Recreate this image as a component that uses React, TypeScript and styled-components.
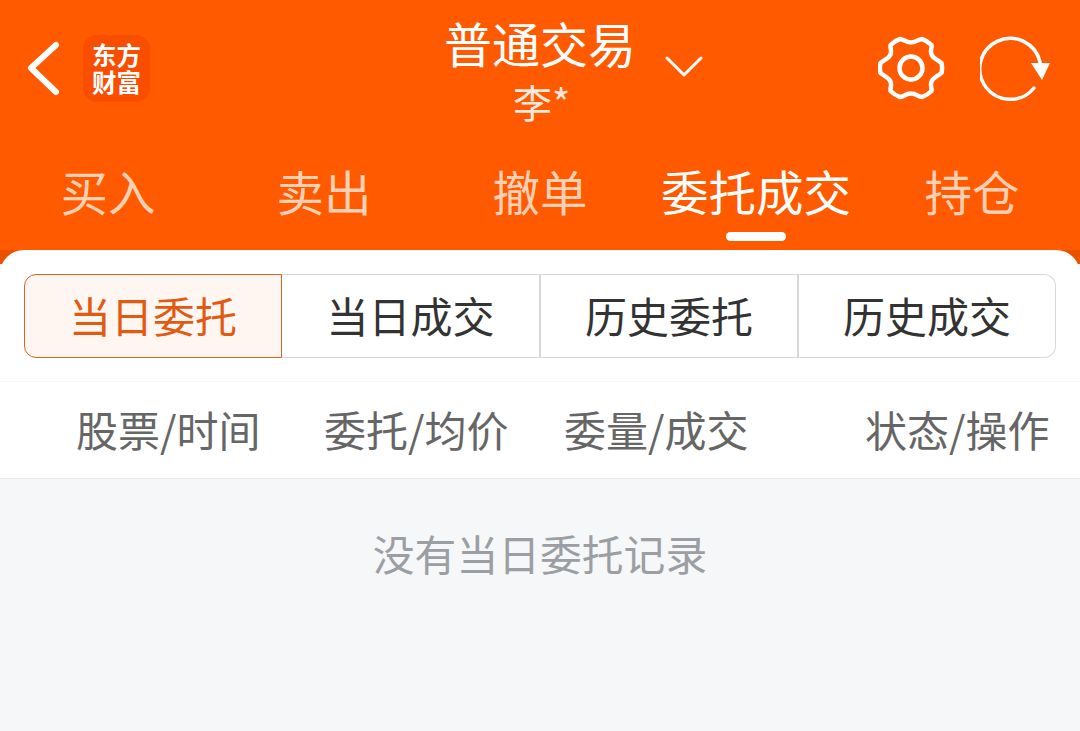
import React from 'react';
import styled, { createGlobalStyle } from 'styled-components';

const GlobalStyle = createGlobalStyle`
  html, body {
    margin: 0;
    padding: 0;
    background: #f6f7f9;
  }
  * {
    box-sizing: border-box;
  }
`;

const Page = styled.div`
  width: 1080px;
  height: 731px;
  overflow: hidden;
  display: flex;
  flex-direction: column;
  background: #f6f7f9;
  font-family: "Noto Sans CJK SC", "Noto Sans", sans-serif;
`;

const Header = styled.header`
  height: 264px;
  flex-shrink: 0;
  background: linear-gradient(#ff5a00 0, #ff5a00 250px, #e85200 250px);
  display: flex;
  flex-direction: column;
`;

const TopBar = styled.div`
  height: 140px;
  display: grid;
  grid-template-columns: 58px 67px 296px 188px 244px 66px 36px 72px 28px;
  padding-left: 25px;
`;

const BackCell = styled.div`
  padding-top: 40px;
`;

const Logo = styled.div`
  width: 67px;
  height: 67px;
  margin-top: 35px;
  border-radius: 14px;
  background: #f94d00;
  color: #fff;
  font-size: 24.5px;
  font-weight: 700;
  line-height: 27px;
  text-align: center;
  padding-top: 6px;
`;

const TitleBlock = styled.div`
  grid-column: 4;
  color: #fff;
  text-align: center;
  position: relative;
`;

const Title = styled.div`
  font-size: 48px;
  line-height: 56px;
  margin: 14px 0 0 -2px;
  text-align: left;
  white-space: nowrap;
`;

const Account = styled.div`
  font-size: 39px;
  line-height: 46px;
  margin-top: 8px;
  padding-left: 3px;
  color: #ffe9dc;
`;

const Caret = styled.svg`
  position: absolute;
  left: 219px;
  top: 55px;
`;

const IconCell = styled.div<{ $col: number }>`
  grid-column: ${(p) => p.$col};
  padding-top: 35px;
`;

const TabBar = styled.nav`
  height: 110px;
  display: grid;
  grid-template-columns: repeat(5, 216px);
`;

const Tab = styled.div<{ $active?: boolean }>`
  position: relative;
  text-align: center;
  font-size: 47.5px;
  line-height: 56px;
  padding-top: 23px;
  white-space: nowrap;
  color: ${(p) => (p.$active ? '#fff' : '#ffd0b3')};
`;

const TabMark = styled.span`
  position: absolute;
  left: 78px;
  top: 92px;
  width: 60px;
  height: 9px;
  border-radius: 5px;
  background: #fff;
`;

const Panel = styled.main`
  margin-top: -14px;
  border-radius: 24px 24px 0 0;
  background: #fff;
  flex-shrink: 0;
`;

const Segments = styled.div`
  display: grid;
  grid-template-columns: 258px 259px 258px 257px;
  height: 132px;
  padding: 24px 24px 0;
  border-bottom: 1px solid #f5f5f5;
`;

const Segment = styled.div<{ $active?: boolean; $first?: boolean; $last?: boolean }>`
  height: 84px;
  display: flex;
  align-items: center;
  justify-content: center;
  font-size: 42px;
  padding-bottom: 3px;
  white-space: nowrap;
  color: ${(p) => (p.$active ? '#e25a12' : '#333')};
  background: ${(p) => (p.$active ? '#fff6f1' : '#fff')};
  border: 1px solid ${(p) => (p.$active ? '#d2662b' : '#d8d8dc')};
  border-left: ${(p) => (p.$first ? undefined : 'none')};
  border-right-width: ${(p) => (p.$last || p.$active ? '1px' : '2px')};
  border-radius: ${(p) => (p.$first ? '12px 0 0 12px' : p.$last ? '0 12px 12px 0' : '0')};
`;

const TableHead = styled.div`
  height: 97px;
  display: grid;
  grid-template-columns: 248px 240px 301px 1fr;
  align-items: center;
  padding: 0 0 3px 76px;
  border-bottom: 1px solid #e9e9ec;
  color: #666;
  font-size: 42px;
  white-space: nowrap;
`;

const EmptyNote = styled.div`
  flex: 1;
  padding-top: 46px;
  text-align: center;
  color: #9b9ea3;
  font-size: 41.8px;
  line-height: 56px;
`;

const tabs = ['买入', '卖出', '撤单', '委托成交', '持仓'];
const segments = ['当日委托', '当日成交', '历史委托', '历史成交'];
const columns = ['股票/时间', '委托/均价', '委量/成交', '状态/操作'];

const App: React.FC = () => {
  return (
    <Page>
      <GlobalStyle />
      <Header>
        <TopBar>
          <BackCell>
            <svg width="36" height="56" viewBox="0 0 36 56" fill="none">
              <path d="M31 5 6 28l25 24" stroke="#fff" strokeWidth="6" strokeLinecap="round" strokeLinejoin="round" />
            </svg>
          </BackCell>
          <Logo>
            东方
            <br />
            财富
          </Logo>
          <TitleBlock>
            <Title>普通交易</Title>
            <Account>李*</Account>
            <Caret width="38" height="24" viewBox="0 0 38 24" fill="none">
              <path d="M2 3l17 17L36 3" stroke="#fff" strokeWidth="3" strokeLinecap="round" strokeLinejoin="round" />
            </Caret>
          </TitleBlock>
          <IconCell $col={6}>
            <svg width="68" height="66" viewBox="1 0 68 66" fill="none" stroke="#fff" strokeWidth="4.500">
              <path
                d="M23 4c3 0 5.500 3.500 11 3.500S42 4 45 4c3 1 7 3.500 9.500 6 .5 3-1.500 5.500 0 9.500s5.500 5 10 8.500c.7 3 .7 7 0 10-4.500 3.500-8.500 4.500-10 8.500s.5 6.500 0 9.500c-2.500 2.500-6.500 5-9.500 6-3 0-5.500-3.500-11-3.500S26 62 23 62c-3-1-7-3.500-9.500-6-.5-3 1.500-5.500 0-9.500s-5.500-5-10-8.500c-.7-3-.7-7 0-10 4.500-3.500 8.500-4.500 10-8.500s-.5-6.500 0-9.500C16 7.500 20 5 23 4Z"
                strokeLinejoin="round"
              />
              <circle cx="34" cy="33" r="11.500" />
            </svg>
          </IconCell>
          <IconCell $col={8}>
            <svg width="72" height="66" viewBox="0 0 72 66" fill="none">
              <path d="M54 53A30.500 30.500 0 1 1 60 27" stroke="#fff" strokeWidth="3.500" strokeLinecap="round" />
              <path d="M51 28h19l-8 17z" fill="#fff" />
            </svg>
          </IconCell>
        </TopBar>
        <TabBar>
          {tabs.map((tab) => (
            <Tab key={tab} $active={tab === '委托成交'}>
              {tab}
              {tab === '委托成交' && <TabMark />}
            </Tab>
          ))}
        </TabBar>
      </Header>
      <Panel>
        <Segments>
          {segments.map((label, index) => (
            <Segment key={label} $active={index === 0} $first={index === 0} $last={index === segments.length - 1}>
              {label}
            </Segment>
          ))}
        </Segments>
        <TableHead>
          {columns.map((col) => (
            <span key={col}>{col}</span>
          ))}
        </TableHead>
      </Panel>
      <EmptyNote>没有当日委托记录</EmptyNote>
    </Page>
  );
};

export default App;
